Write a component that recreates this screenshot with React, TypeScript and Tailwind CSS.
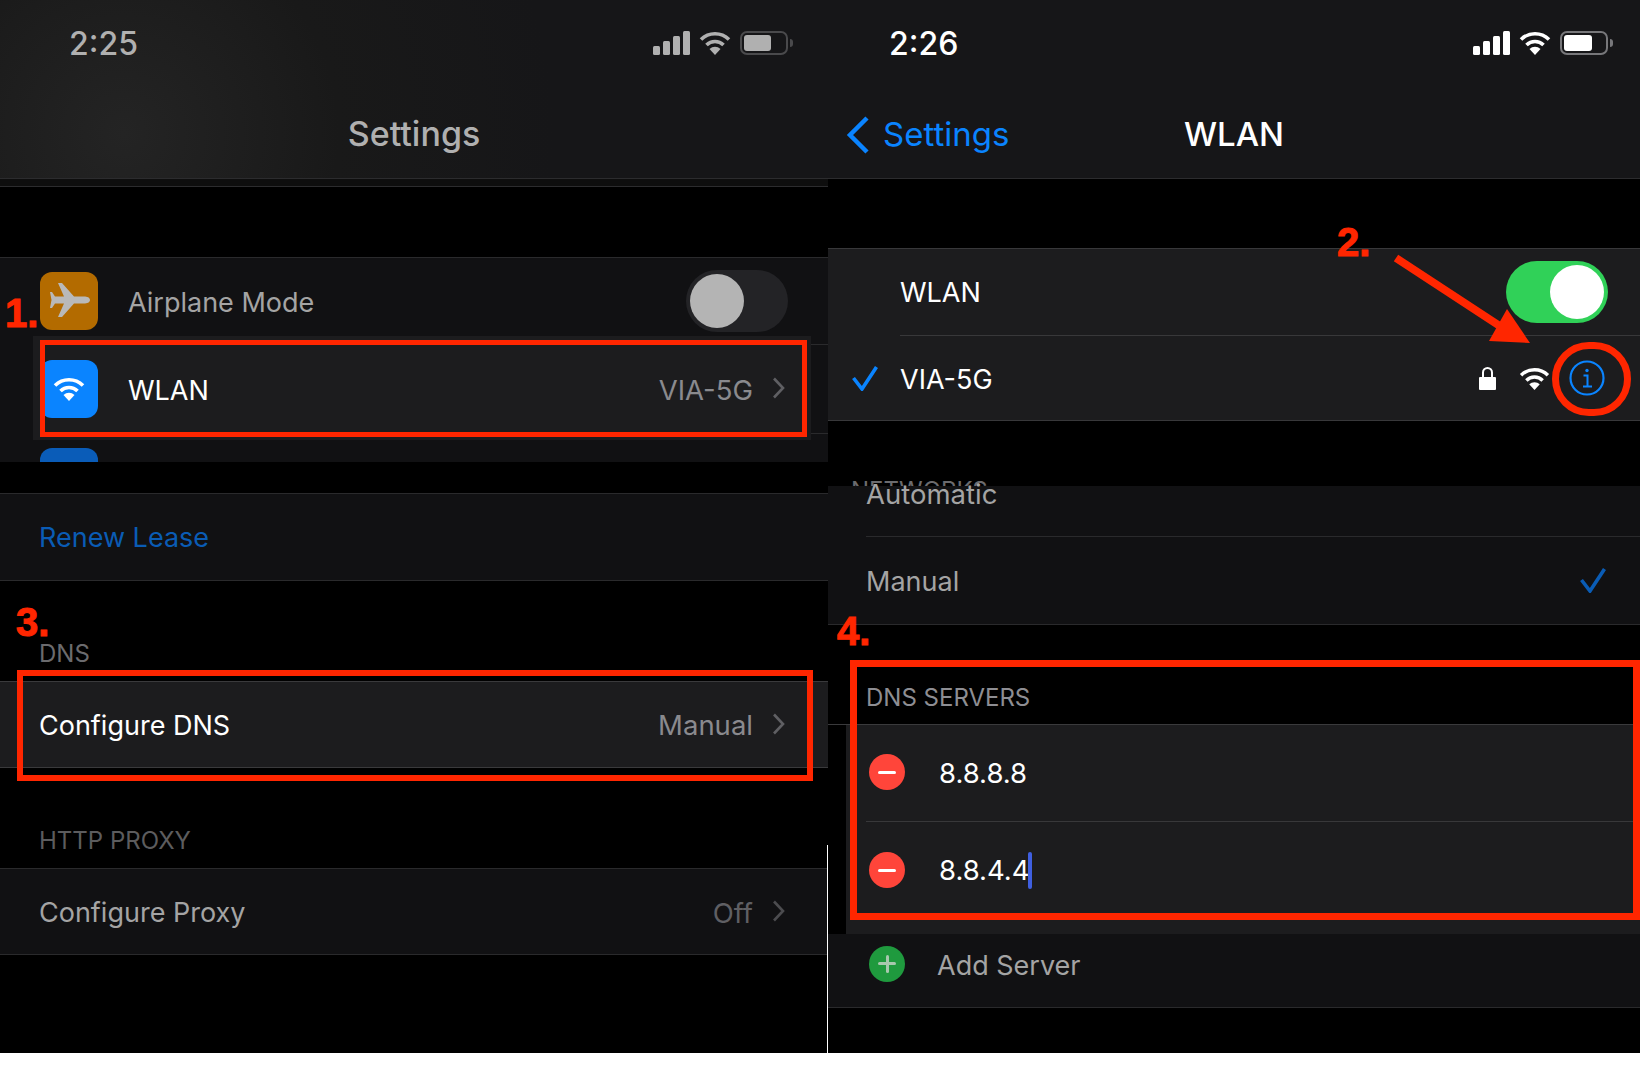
const font = "font-['Inter','Liberation_Sans',sans-serif]"

function Signal({ color }: { color: string }) {
  return (
    <svg width="37" height="24" viewBox="0 0 37 24" fill={color}>
      <rect x="0" y="15" width="7" height="9" rx="1.5" />
      <rect x="10" y="10" width="7" height="14" rx="1.5" />
      <rect x="20" y="5" width="7" height="19" rx="1.5" />
      <rect x="30" y="0" width="7" height="24" rx="1.5" />
    </svg>
  )
}

function Wifi({ color, w = 32, h = 24 }: { color: string; w?: number; h?: number }) {
  return (
    <svg width={w} height={h} viewBox="0 0 32 24" fill="none">
      <path d="M2 8.5 A20 20 0 0 1 30 8.5" stroke={color} strokeWidth="3.6" />
      <path d="M7.5 14 A12 12 0 0 1 24.5 14" stroke={color} strokeWidth="3.6" />
      <path d="M16 24 L10.5 18 A8 8 0 0 1 21.5 18 Z" fill={color} />
    </svg>
  )
}

function Battery({ color, rim, fill }: { color: string; rim: string; fill: number }) {
  return (
    <div className="flex items-center">
      <div className="h-[24px] w-[48px] rounded-[7px] border-2 p-[2px]" style={{ borderColor: rim }}>
        <div className="h-full rounded-[3px]" style={{ width: fill, backgroundColor: color }} />
      </div>
      <div className="ml-[2px] h-[8px] w-[3px] rounded-r-full" style={{ backgroundColor: rim }} />
    </div>
  )
}

function Chevron({ color = '#5f5f63' }: { color?: string }) {
  return (
    <svg width="13" height="22" viewBox="0 0 13 22" fill="none">
      <path d="M2 1.5 L11 11 L2 20.5" stroke={color} strokeWidth="2.6" />
    </svg>
  )
}

function Tick({ color }: { color: string }) {
  return (
    <svg width="26" height="25" viewBox="0 0 26 25" fill="none">
      <path d="M1.5 12 L10 23 L24.5 1" stroke={color} strokeWidth="3.6" />
    </svg>
  )
}

function Plane() {
  return (
    <svg width="58" height="58" viewBox="0 0 58 58" fill="#b9b9b9">
      <path d="M50 28 C50 25.5 47 24.5 44 24.5 L34 24.5 L22 11 L18 11 L24 24.5 L15 24.5 L12 20 L10 20 L11.5 28 L10 36 L12 36 L15 31.5 L24 31.5 L18 45 L22 45 L34 31.5 L44 31.5 C47 31.5 50 30.5 50 28 Z" />
    </svg>
  )
}

function Info() {
  return (
    <svg width="36" height="36" viewBox="0 0 36 36" fill="none" stroke="#0a84ff">
      <circle cx="18" cy="18" r="16.5" strokeWidth="2.2" />
      <circle cx="18" cy="10.5" r="1.7" fill="#0a84ff" stroke="none" />
      <path d="M14.5 15.5 H18.5 V26 M14 26.5 H23" strokeWidth="2" />
    </svg>
  )
}

function Lock() {
  return (
    <svg width="17" height="24" viewBox="0 0 17 24" fill="none">
      <path d="M4 11 V6.5 A4.5 4.5 0 0 1 13 6.5 V11" stroke="#fff" strokeWidth="2" />
      <rect x="0" y="11" width="17" height="13" rx="1" fill="#fff" />
    </svg>
  )
}

function RoundBadge({ bg, plus, mark }: { bg: string; plus?: boolean; mark: string }) {
  return (
    <div className="relative h-[36px] w-[36px] shrink-0 rounded-full" style={{ backgroundColor: bg }}>
      <div className="absolute left-[9px] top-[16.5px] h-[3px] w-[18px] rounded-full" style={{ backgroundColor: mark }} />
      {plus && <div className="absolute left-[16.5px] top-[9px] h-[18px] w-[3px] rounded-full" style={{ backgroundColor: mark }} />}
    </div>
  )
}

function Nav({ time, timeColor, children, pl, bg }: { time: string; timeColor: string; children: React.ReactNode; pl: string; bg: string }) {
  return (
    <div className={`h-[179px] border-b border-[#2c2c2e] ${bg}`}>
      <div className={`flex h-[86px] items-center justify-between pt-[2px] ${pl}`}>
        <span className="text-[32px] font-medium leading-none" style={{ color: timeColor }}>{time}</span>
      </div>
      {children}
    </div>
  )
}

function Note({ n, cls }: { n: string; cls: string }) {
  return (
    <span className={`absolute font-['Liberation_Sans',sans-serif] text-[40px] font-bold leading-none text-[#ff2600] [-webkit-text-stroke:1px_#ff2600] ${cls}`}>{n}</span>
  )
}

export default function App() {
  return (
    <div className={`relative flex h-[1077px] w-full flex-col overflow-hidden bg-white ${font}`}>
      <div className="flex h-[1053px] bg-black">
        {/* left phone */}
        <div className="flex w-[828px] shrink-0 flex-col">
          <Nav time="2:25" timeColor="#b0b0b0" pl="pl-[69px]" bg="bg-[radial-gradient(circle_at_15%_75%,#242424_0%,#191919_30%,#161618_60%)]">
            <div className="flex h-[92px] items-center justify-center pt-[3px] text-[34px] font-medium text-[#b0b0b0]">Settings</div>
          </Nav>
          <div className="h-[8px] border-b border-[#2c2c2e] bg-[#0e0e0e]" />
          <div className="h-[70px]" />
          <div className="h-[205px] overflow-hidden border-t border-[#2a2a2c] bg-[#111113]">
            <div className="flex h-[78px] items-center pl-[40px] pr-[40px] pt-2">
              <div className="h-[58px] w-[58px] shrink-0 rounded-[12px] bg-[#b36b00]"><Plane /></div>
              <span className="ml-[30px] mt-[4px] text-[27px] text-[#a4a4a4]">Airplane Mode</span>
              <div className="ml-auto flex h-[62px] w-[102px] items-center rounded-full bg-[#232326] pl-[4px]">
                <div className="h-[54px] w-[54px] rounded-full bg-[#b4b4b4]" />
              </div>
            </div>
            <div className="flex">
              <div className="ml-[33px] flex h-[104px] w-[778px] items-center bg-[#1c1c1e] pl-[7px] pr-[26px] pt-[2px]">
                <div className="flex h-[58px] w-[58px] shrink-0 items-center justify-center rounded-[12px] bg-[#0a84ff]"><Wifi color="#fff" /></div>
                <span className="ml-[30px] mt-[4px] text-[27px] text-white">WLAN</span>
                <span className="ml-auto mt-[4px] text-[27.5px] text-[#8a8a8e]">VIA-5G</span>
                <span className="ml-[19px] -mt-[2px]"><Chevron /></span>
              </div>
              <div className="mt-[8px] h-[90px] flex-1 border-y border-[#2a2a2c]" />
            </div>
            <div className="ml-[40px] mt-[8px] h-[58px] w-[58px] rounded-[12px] bg-[#0a5cb8]" />
          </div>
          <div className="h-[31px]" />
          <div className="flex h-[88px] items-center border-y border-[#2a2a2c] bg-[#111113] pl-[39px] pt-[3px] text-[27px] text-[#0a5cb5]">Renew Lease</div>
          <div className="flex h-[100px] items-end pb-[15px] pl-[39px] text-[24px] leading-none text-[#6b6b6e]">DNS</div>
          <div className="flex h-[87px] items-center border-y border-[#3a3a3c] bg-[#1c1c1e] pl-[39px] pr-[43px] text-[27px]">
            <span className="mt-[3px] text-white">Configure DNS</span>
            <span className="ml-auto mt-[3px] text-[27.5px] text-[#8a8a8e]">Manual</span>
            <span className="ml-[19px] -mt-[2px]"><Chevron /></span>
          </div>
          <div className="flex h-[100px] items-end pb-[15px] pl-[39px] text-[24px] leading-none text-[#5c5c5e]">HTTP PROXY</div>
          <div className="flex h-[87px] items-center border-y border-[#2a2a2c] bg-[#111113] pl-[39px] pr-[43px] text-[27px]">
            <span className="mt-[4px] text-[#a4a4a4]">Configure Proxy</span>
            <span className="ml-auto mt-[4px] text-[27.5px] text-[#5f5f63]">Off</span>
            <span className="ml-[19px] -mt-[2px]"><Chevron color="#4c4c4f" /></span>
          </div>
        </div>

        {/* right phone */}
        <div className="flex min-w-0 flex-1 flex-col">
          <Nav time="2:26" timeColor="#fff" pl="pl-[61px]" bg="bg-[#161618]">
            <div className="grid h-[92px] grid-cols-[1fr_auto_1fr] items-center pt-[6px] text-[33px] font-medium">
              <div className="flex items-center pl-[18px] text-[#0a84ff]">
                <svg width="24" height="38" viewBox="0 0 24 38" fill="none">
                  <path d="M21 2 L4 19 L21 36" stroke="#0a84ff" strokeWidth="4.5" />
                </svg>
                <span className="ml-[13px] font-normal">Settings</span>
              </div>
              <span className="text-white">WLAN</span>
              <div />
            </div>
          </Nav>
          <div className="h-[69px]" />
          <div className="border-y border-[#38383a] bg-[#1c1c1e]">
            <div className="flex h-[86px] items-center pl-[72px] pr-[32px]">
              <span className="mt-[2px] text-[27px] text-white">WLAN</span>
              <div className="ml-auto flex h-[62px] w-[102px] items-center justify-end rounded-full bg-[#30d158] pr-[4px]">
                <div className="h-[54px] w-[54px] rounded-full bg-white" />
              </div>
            </div>
            <div className="ml-[72px] border-t border-[#38383a]" />
            <div className="flex h-[84px] items-center pl-[24px] pr-[35px]">
              <div className="w-[48px]"><Tick color="#0a84ff" /></div>
              <span className="mt-[4px] text-[27px] text-white">VIA-5G</span>
              <span className="ml-auto"><Lock /></span>
              <span className="ml-[23px]"><Wifi color="#fff" w={31} h={23} /></span>
              <span className="ml-[19px]"><Info /></span>
            </div>
          </div>
          <div className="h-[65px] overflow-hidden pl-[23px] pt-[58px] text-[24px] leading-none text-[#6b6b6e]">NETWORKS</div>
          <div className="border-b border-[#2a2a2c] bg-[#111113]">
            <div className="flex h-[50px] items-start pl-[38px]">
              <span className="-mt-[12px] text-[27.5px] leading-[40px] text-[#a4a4a4]">Automatic</span>
            </div>
            <div className="ml-[38px] border-t border-[#2a2a2c]" />
            <div className="flex h-[87px] items-center pl-[38px] pr-[34px] text-[27px] text-[#a4a4a4]">
              <span className="mt-[4px]">Manual</span>
              <span className="ml-auto"><Tick color="#0a5cb5" /></span>
            </div>
          </div>
          <div className="flex h-[99px] items-end pb-[14px] pl-[38px] text-[24px] leading-none text-[#8e8e93]">DNS SERVERS</div>
          <div className="border-t border-[#3a3a3c]">
            <div className="ml-[18px] bg-[#1c1c1e] text-[27.5px] text-white">
              <div className="flex h-[96px] items-center gap-[34px] pb-[2px] pl-[23px]">
                <RoundBadge bg="#ff453a" mark="#fff" />
                <span className="mt-[4px]">8.8.8.8</span>
              </div>
              <div className="ml-[20px] border-t border-[#38383a]" />
              <div className="flex h-[112px] items-start pl-[23px] pt-[30px]">
                <RoundBadge bg="#ff453a" mark="#fff" />
                <span className="ml-[34px] leading-[36px]">8.8.4.4</span>
                <div className="-ml-[2px] h-[37px] w-[4px] rounded-full bg-[#3f5fe0]" />
              </div>
            </div>
          </div>
          <div className="flex h-[74px] items-center gap-[32px] border-b border-[#2a2a2c] bg-[#111113] pb-[14px] pl-[41px]">
            <RoundBadge bg="#1f9a3e" mark="#a8c8ae" plus />
            <span className="mt-[5px] text-[27px] text-[#a4a4a4]">Add Server</span>
          </div>
        </div>
      </div>

      {/* status icons */}
      <div className="absolute left-[653px] top-[31px] flex items-center gap-[9px]">
        <Signal color="#b0b0b0" />
        <Wifi color="#b0b0b0" />
        <Battery color="#b0b0b0" rim="#4a4a4c" fill={27} />
      </div>
      <div className="absolute left-[1473px] top-[31px] flex items-center gap-[9px]">
        <Signal color="#fff" />
        <Wifi color="#fff" />
        <Battery color="#fff" rim="#77777a" fill={28} />
      </div>

      {/* seam between the two shots */}
      <div className="absolute left-[827px] top-[845px] h-[208px] w-px bg-white" />

      {/* red annotations */}
      <div className="absolute left-[40px] top-[340px] h-[97px] w-[767px] border-[5px] border-[#ff2600]" />
      <div className="absolute left-[17px] top-[670px] h-[111px] w-[796px] border-[6px] border-[#ff2600]" />
      <div className="absolute left-[850px] top-[660px] h-[260px] w-[790px] border-[7px] border-[#ff2600]" />
      <div className="absolute left-[1552px] top-[342px] h-[74px] w-[79px] rounded-full border-[7px] border-[#ff2600]" />
      <svg className="absolute left-[1390px] top-[250px]" width="150" height="100" viewBox="0 0 150 100" fill="#ff2600">
        <path d="M6 8 L122 84" stroke="#ff2600" strokeWidth="8" />
        <path d="M117 59 L99 91 L140 93 Z" />
      </svg>
      <Note n="1." cls="left-[5px] top-[293px]" />
      <Note n="2." cls="left-[1337px] top-[222px]" />
      <Note n="3." cls="left-[16px] top-[602px]" />
      <Note n="4." cls="left-[837px] top-[611px]" />
    </div>
  )
}
